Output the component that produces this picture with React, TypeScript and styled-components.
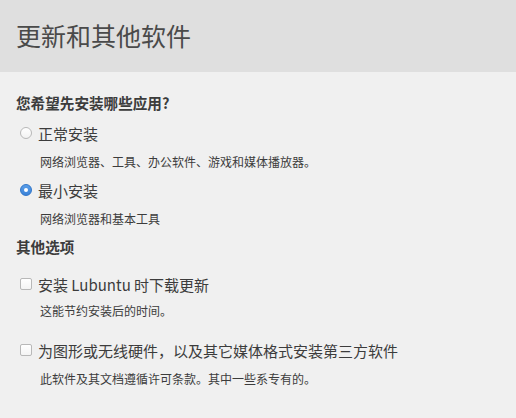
import React from 'react'
import styled, { createGlobalStyle } from 'styled-components'

const GlobalStyle = createGlobalStyle`
  html, body {
    margin: 0;
    padding: 0;
    background: #f0f0f0;
  }
  body {
    font-family: "Noto Sans CJK SC", "Noto Sans", sans-serif;
    color: #3c3c3c;
  }
`

const Page = styled.div`
  width: 516px;
  height: 418px;
  background: #f0f0f0;
  overflow: hidden;
`

const Header = styled.div`
  height: 72px;
  background: #dfdfdf;
  display: flex;
  align-items: center;
  padding-left: 16px;
  box-sizing: border-box;
`

const Title = styled.h1`
  margin: 0 0 2px 0;
  font-size: 25px;
  font-weight: 400;
  color: #4a4a4a;
  line-height: 30px;
`

const Body = styled.div`
  display: flex;
  flex-direction: column;
  padding: 21px 16px 0 16px;
`

const Heading = styled.div<{ $top?: number }>`
  font-size: 14.6px;
  font-weight: 700;
  line-height: 20px;
  color: #3c3c3c;
  margin-top: ${p => p.$top ?? 0}px;
`

const Row = styled.label<{ $top: number }>`
  display: flex;
  align-items: center;
  height: 22px;
  margin-top: ${p => p.$top}px;
  padding-left: 4px;
  font-size: 15px;
  color: #3c3c3c;
  gap: 6px;
`

const Radio = styled.span<{ $on?: boolean }>`
  width: 12px;
  height: 12px;
  border-radius: 50%;
  box-sizing: border-box;
  flex: none;
  display: flex;
  align-items: center;
  justify-content: center;
  border: 1px solid ${p => (p.$on ? '#2f75c9' : '#b8b8b8')};
  background: ${p => (p.$on ? 'linear-gradient(#5a9ee8, #3a82d8)' : 'linear-gradient(#ffffff, #f2f2f2)')};

  &::after {
    content: '';
    display: ${p => (p.$on ? 'block' : 'none')};
    width: 4px;
    height: 4px;
    border-radius: 50%;
    background: #fff;
  }
`

const Check = styled.span`
  width: 12px;
  height: 12px;
  border-radius: 2px;
  box-sizing: border-box;
  flex: none;
  border: 1px solid #b8b8b8;
  background: linear-gradient(#ffffff, #f4f4f4);
`

const Desc = styled.div<{ $top?: number }>`
  font-size: 12px;
  line-height: 18px;
  color: #3c3c3c;
  padding-left: 24px;
  margin-top: ${p => p.$top ?? 9}px;
`

export default function App() {
  return (
    <Page>
      <GlobalStyle />
      <Header>
        <Title>更新和其他软件</Title>
      </Header>
      <Body>
        <Heading>您希望先安装哪些应用?</Heading>

        <Row $top={9}>
          <Radio />
          正常安装
        </Row>
        <Desc>网络浏览器、工具、办公软件、游戏和媒体播放器。</Desc>

        <Row $top={8}>
          <Radio $on />
          最小安装
        </Row>
        <Desc>网络浏览器和基本工具</Desc>

        <Heading $top={9}>其他选项</Heading>

        <Row $top={16}>
          <Check />
          安装 Lubuntu 时下载更新
        </Row>
        <Desc $top={7}>这能节约安装后的时间。</Desc>

        <Row $top={19}>
          <Check />
          为图形或无线硬件，以及其它媒体格式安装第三方软件
        </Row>
        <Desc>此软件及其文档遵循许可条款。其中一些系专有的。</Desc>
      </Body>
    </Page>
  )
}
